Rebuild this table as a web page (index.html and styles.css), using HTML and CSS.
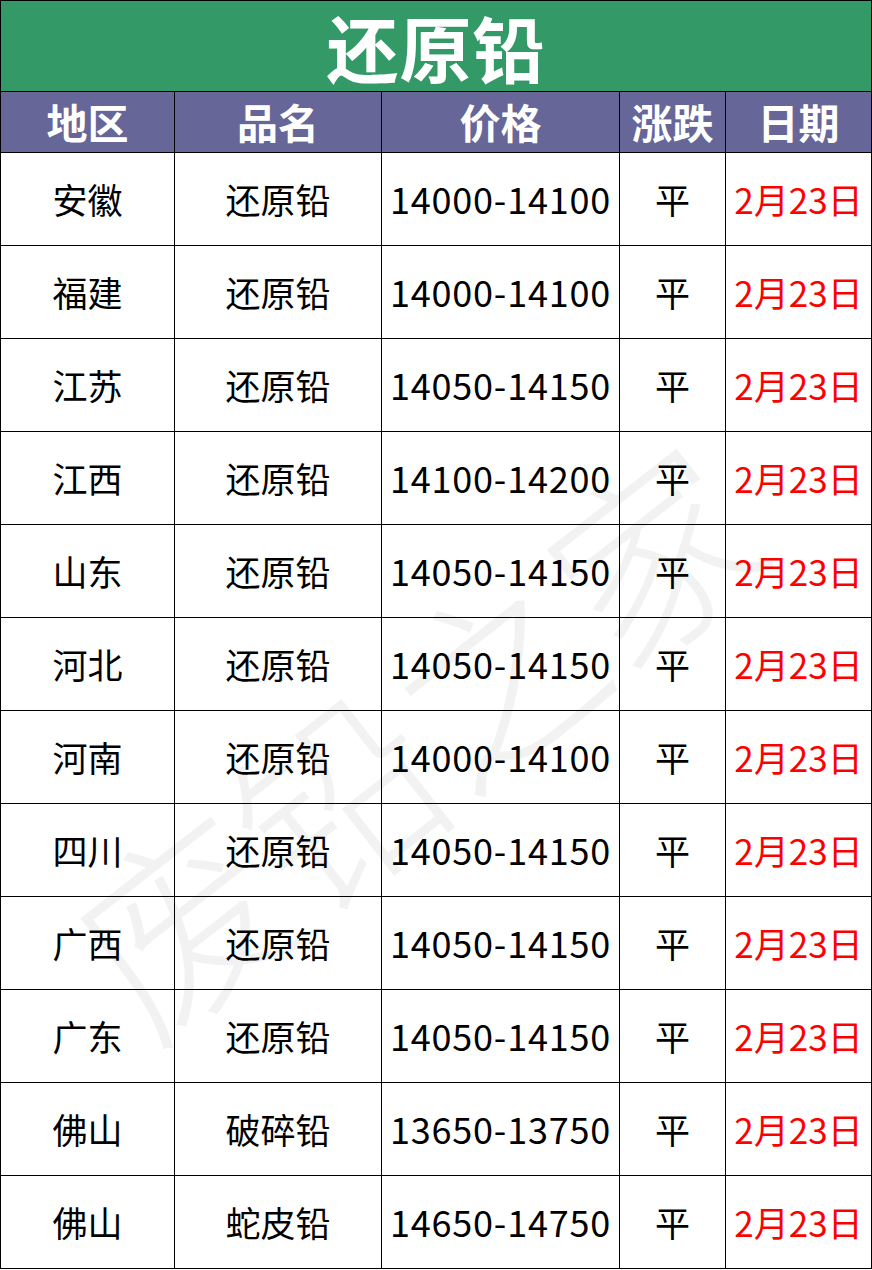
FILE: index.html
```html
<!DOCTYPE html>
<html lang="zh-CN">
<head>
<meta charset="utf-8">
<title>还原铅</title>
<link rel="stylesheet" href="styles.css">
</head>
<body>
<div class="sheet">
  <table class="price-table">
    <colgroup>
      <col class="c-region">
      <col class="c-name">
      <col class="c-price">
      <col class="c-change">
      <col class="c-date">
    </colgroup>
    <thead>
      <tr class="title-row"><th colspan="5">还原铅</th></tr>
      <tr class="head-row">
        <th>地区</th><th>品名</th><th>价格</th><th>涨跌</th><th>日期</th>
      </tr>
    </thead>
    <tbody>
      <tr><td>安徽</td><td>还原铅</td><td class="num">14000-14100</td><td>平</td><td class="date">2月23日</td></tr>
      <tr><td>福建</td><td>还原铅</td><td class="num">14000-14100</td><td>平</td><td class="date">2月23日</td></tr>
      <tr><td>江苏</td><td>还原铅</td><td class="num">14050-14150</td><td>平</td><td class="date">2月23日</td></tr>
      <tr><td>江西</td><td>还原铅</td><td class="num">14100-14200</td><td>平</td><td class="date">2月23日</td></tr>
      <tr><td>山东</td><td>还原铅</td><td class="num">14050-14150</td><td>平</td><td class="date">2月23日</td></tr>
      <tr><td>河北</td><td>还原铅</td><td class="num">14050-14150</td><td>平</td><td class="date">2月23日</td></tr>
      <tr><td>河南</td><td>还原铅</td><td class="num">14000-14100</td><td>平</td><td class="date">2月23日</td></tr>
      <tr><td>四川</td><td>还原铅</td><td class="num">14050-14150</td><td>平</td><td class="date">2月23日</td></tr>
      <tr><td>广西</td><td>还原铅</td><td class="num">14050-14150</td><td>平</td><td class="date">2月23日</td></tr>
      <tr><td>广东</td><td>还原铅</td><td class="num">14050-14150</td><td>平</td><td class="date">2月23日</td></tr>
      <tr><td>佛山</td><td>破碎铅</td><td class="num">13650-13750</td><td>平</td><td class="date">2月23日</td></tr>
      <tr><td>佛山</td><td>蛇皮铅</td><td class="num">14650-14750</td><td>平</td><td class="date">2月23日</td></tr>
    </tbody>
  </table>
  <div class="watermark" aria-hidden="true">废铅之家</div>
</div>
</body>
</html>
```

FILE: styles.css
```css
html, body {
  margin: 0;
  padding: 0;
  background: #ffffff;
}

.sheet {
  position: relative;
  width: 872px;
  height: 1270px;
  overflow: hidden;
  font-family: "Noto Sans CJK SC", "Noto Sans", sans-serif;
}

.price-table {
  border-collapse: collapse;
  table-layout: fixed;
  width: 871px;
}

.c-region { width: 174px; }
.c-name { width: 207px; }
.c-price { width: 238px; }
.c-change { width: 106px; }
.c-date { width: 146px; }

.price-table th,
.price-table td {
  border: 1px solid #000000;
  padding: 0;
  text-align: center;
  vertical-align: middle;
  white-space: nowrap;
}

.title-row th {
  height: 90px;
  background: #339966;
  color: #ffffff;
  font-size: 72px;
  font-weight: 700;
  line-height: 1.15;
  letter-spacing: 1px;
}

.head-row th {
  height: 60px;
  background: #666699;
  color: #ffffff;
  font-size: 41px;
  font-weight: 700;
  line-height: 1.2;
}

.price-table td {
  height: 92px;
  font-size: 35px;
  color: #000000;
  line-height: 1.2;
}

.price-table td.num {
  font-size: 36px;
  letter-spacing: 0.8px;
}

.price-table td.date {
  color: #ff0000;
  font-size: 35px;
  letter-spacing: 0;
}

.watermark {
  position: absolute;
  left: 12px;
  top: 632px;
  width: 800px;
  text-align: center;
  font-size: 200px;
  font-weight: 300;
  line-height: 1;
  color: rgba(0, 0, 0, 0.05);
  transform: rotate(-38deg);
  transform-origin: center center;
  pointer-events: none;
  white-space: nowrap;
}
```
